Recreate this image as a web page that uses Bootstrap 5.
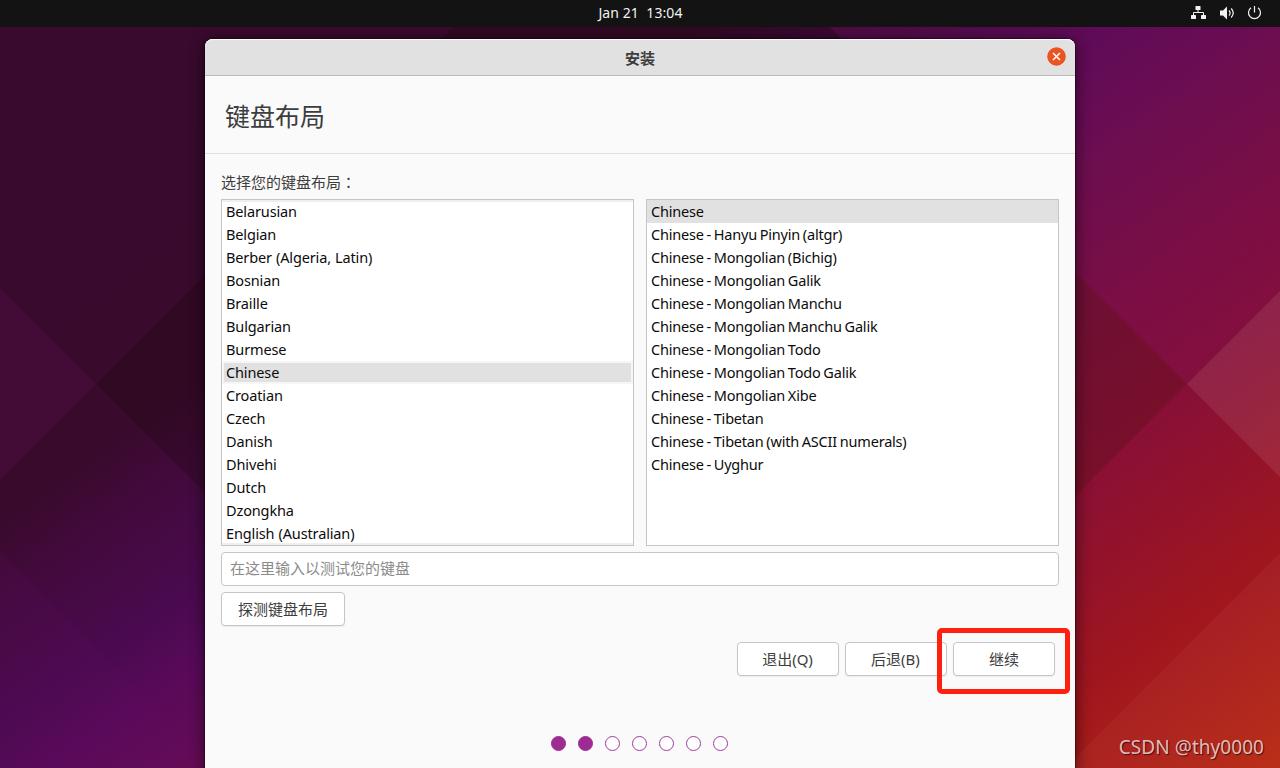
<!DOCTYPE html>
<html lang="zh-CN">
<head>
<meta charset="utf-8">
<meta name="viewport" content="width=device-width, initial-scale=1">
<title>安装</title>
<link href="https://cdn.jsdelivr.net/npm/bootstrap@5.3.0/dist/css/bootstrap.min.css" rel="stylesheet">
<style>
body{font-family:"Noto Sans","Noto Sans CJK SC",sans-serif;font-size:15px;color:#3d3d3d;background:#300a24}
.desktop{width:1280px;height:768px;background:linear-gradient(145deg,#390a2e 0%,#390a2c 31%,#420a3c 36%,#4b0a50 44%,#580a59 48%,#630b56 53%,#6b0e4d 57%,#7b0e42 65%,#850f39 72%,#8e1130 77%,#a0161e 87%,#b82810 100%)}
.wallpaper{inset:0;z-index:0}
.topbar{height:27px;background:#131313;color:#f2f2f2;font-size:14px;z-index:2}
.clock{line-height:26px;letter-spacing:.08px;padding-left:1px;white-space:pre}
.tray{right:17px;top:5px}
.installer{width:870px;height:729px;margin-top:12px;background:#fafafa;border-radius:8px 8px 0 0;box-shadow:0 0 1px 1px rgba(0,0,0,.35),0 3px 14px 3px rgba(0,0,0,.42);z-index:1}
.titlebar{height:37px;background:#e1e1e1;border-bottom:1px solid #bababa;border-radius:8px 8px 0 0;box-shadow:inset 0 1px #fbfbfb;font-weight:700;font-size:15px;padding-top:2px}
.close-btn{right:9px;top:8px;width:19px;height:19px}
.page-head{height:78px;border-bottom:1px solid #dedede;padding:5px 0 0 20px;font-size:25px}
.prompt{line-height:22px;margin:17px 0 6px}
.picker{height:347px;border:1px solid #c5c5c5;background:#fff;color:#0c0c0c;font-size:14.5px;word-spacing:-.8px}
.picker li{height:23px;line-height:23px;padding-left:4px;white-space:nowrap;letter-spacing:-.2px}
.picker .chosen{background:#e1e1e1}
.scrolls{box-shadow:inset 0 2px #efefef,inset 0 -2px #efefef;word-spacing:.4px}
.scrolls li{letter-spacing:-.13px}
.scrolls .chosen{border:solid #f6f6f6;border-width:2px;padding-left:2px;line-height:19px}
.entry{height:34px;border:1px solid #c5c5c5;border-radius:4px;background:#fff;padding:0 8px 2px;margin:6px 0;font-size:15px}
.entry::placeholder{color:#8b8b8b;opacity:1}
.gbtn{height:34px;width:102px;border:1px solid #c5c5c5;border-radius:4px;background:#fff;color:#3d3d3d;padding:0;font-size:15px;line-height:32px;box-shadow:0 1px 1px rgba(0,0,0,.06)}
.keyed{padding-right:1px}
.detect{width:124px}
.actions{gap:6px;margin:16px 4px 0 0}
.callout{left:732px;top:589px;width:133px;height:66px;border:5px solid #ff2012;border-radius:5px}
.dots{gap:12px;margin-top:60px;margin-left:-1px}
.dots span{width:15px;height:15px;border-radius:50%;border:1px solid #a03a9b;background:#fff}
.dots .done{background:#9e2b92;border-color:#9e2b92}
.watermark{right:16px;bottom:8px;font-size:19px;letter-spacing:.05px;line-height:26px;color:#dfbcb8;text-shadow:1px 1px 1px rgba(50,0,0,.75);z-index:2;font-family:"Noto Sans",sans-serif}
</style>
</head>
<body class="overflow-hidden">
<div class="desktop position-relative overflow-hidden">
  <svg class="wallpaper position-absolute" width="1280" height="768" viewBox="0 0 1280 768" aria-hidden="true">
    <path d="M96 384L480 0H803L970 167V601L803 768H480Z" fill="#1a0a08" fill-opacity=".24"/>
    <path d="M1187 384L970 167V601Z" fill="#5c1018" fill-opacity=".35"/>
    <path d="M803 0H1280V291L1187 384Z" fill="#7c1250" fill-opacity=".22"/>
    <path d="M0 288L96 384L0 480Z" fill="#641257" fill-opacity=".25"/>
    <path d="M0 551L217 768H0Z" fill="#650b62" fill-opacity=".15"/>
    <path d="M1280 291V477L1187 384Z" fill="#fff" fill-opacity=".085"/>
    <path d="M1280 553V768H1065Z" fill="#fff" fill-opacity=".035"/>
  </svg>
  <header class="topbar position-relative d-flex justify-content-center">
    <div class="clock">Jan 21  13:04</div>
    <svg class="tray position-absolute" width="73" height="17" viewBox="0 0 73 17" fill="#f2f2f2">
      <rect x="5.500" y="1" width="5" height="4" rx=".6"/><rect x="1" y="10" width="5" height="4" rx=".6"/><rect x="11" y="10" width="5" height="4" rx=".6"/>
      <path d="M8 5v2.500M3.500 10V7.500h10V10" fill="none" stroke="#f2f2f2"/>
      <path d="M30 5.500h3l4-4v13l-4-4h-3z"/>
      <path d="M39 5.500q2.300 2.500 0 5M41.200 3.500q4.100 4.500 0 9" fill="none" stroke="#f2f2f2" stroke-width="1.200"/>
      <path d="M61 2.800a6 6 0 1 0 7 0M64.500 1v6.500" fill="none" stroke="#f2f2f2" stroke-width="1.200"/>
    </svg>
  </header>

  <main class="installer position-relative mx-auto">
    <div class="titlebar d-flex align-items-center justify-content-center position-relative">安装
      <svg class="close-btn position-absolute" viewBox="0 0 19 19"><circle cx="9.500" cy="9.500" r="9.300" fill="#e95420"/><path d="M6 6l7 7M13 6l-7 7" stroke="#fff" stroke-width="1.500"/></svg>
    </div>
    <div class="page-head d-flex align-items-center">键盘布局</div>
    <div class="px-3">
      <p class="prompt">选择您的键盘布局<span lang="zh-TW">：</span></p>
      <div class="d-flex" style="gap:12px">
        <ul class="picker scrolls list-unstyled mb-0 flex-fill w-50">
          <li>Belarusian</li><li>Belgian</li><li>Berber (Algeria, Latin)</li><li>Bosnian</li><li>Braille</li><li>Bulgarian</li><li>Burmese</li><li class="chosen">Chinese</li><li>Croatian</li><li>Czech</li><li>Danish</li><li>Dhivehi</li><li>Dutch</li><li>Dzongkha</li><li>English (Australian)</li>
        </ul>
        <ul class="picker list-unstyled mb-0 flex-fill w-50">
          <li class="chosen">Chinese</li><li>Chinese - Hanyu Pinyin (altgr)</li><li>Chinese - Mongolian (Bichig)</li><li>Chinese - Mongolian Galik</li><li>Chinese - Mongolian Manchu</li><li>Chinese - Mongolian Manchu Galik</li><li>Chinese - Mongolian Todo</li><li>Chinese - Mongolian Todo Galik</li><li>Chinese - Mongolian Xibe</li><li>Chinese - Tibetan</li><li>Chinese - Tibetan (with ASCII numerals)</li><li>Chinese - Uyghur</li>
        </ul>
      </div>
      <input class="entry d-block w-100" placeholder="在这里输入以测试您的键盘">
      <button class="btn gbtn detect d-block">探测键盘布局</button>
      <div class="actions d-flex justify-content-end">
        <button class="btn gbtn keyed">退出(Q)</button><button class="btn gbtn keyed">后退(B)</button><button class="btn gbtn">继续</button>
      </div>
      <div class="dots d-flex justify-content-center">
        <span class="done"></span><span class="done"></span><span></span><span></span><span></span><span></span><span></span>
      </div>
    </div>
    <div class="callout position-absolute"></div>
  </main>
  <div class="watermark position-absolute">CSDN @thy0000</div>
</div>
<script src="https://cdn.jsdelivr.net/npm/bootstrap@5.3.0/dist/js/bootstrap.bundle.min.js"></script>
</body>
</html>
